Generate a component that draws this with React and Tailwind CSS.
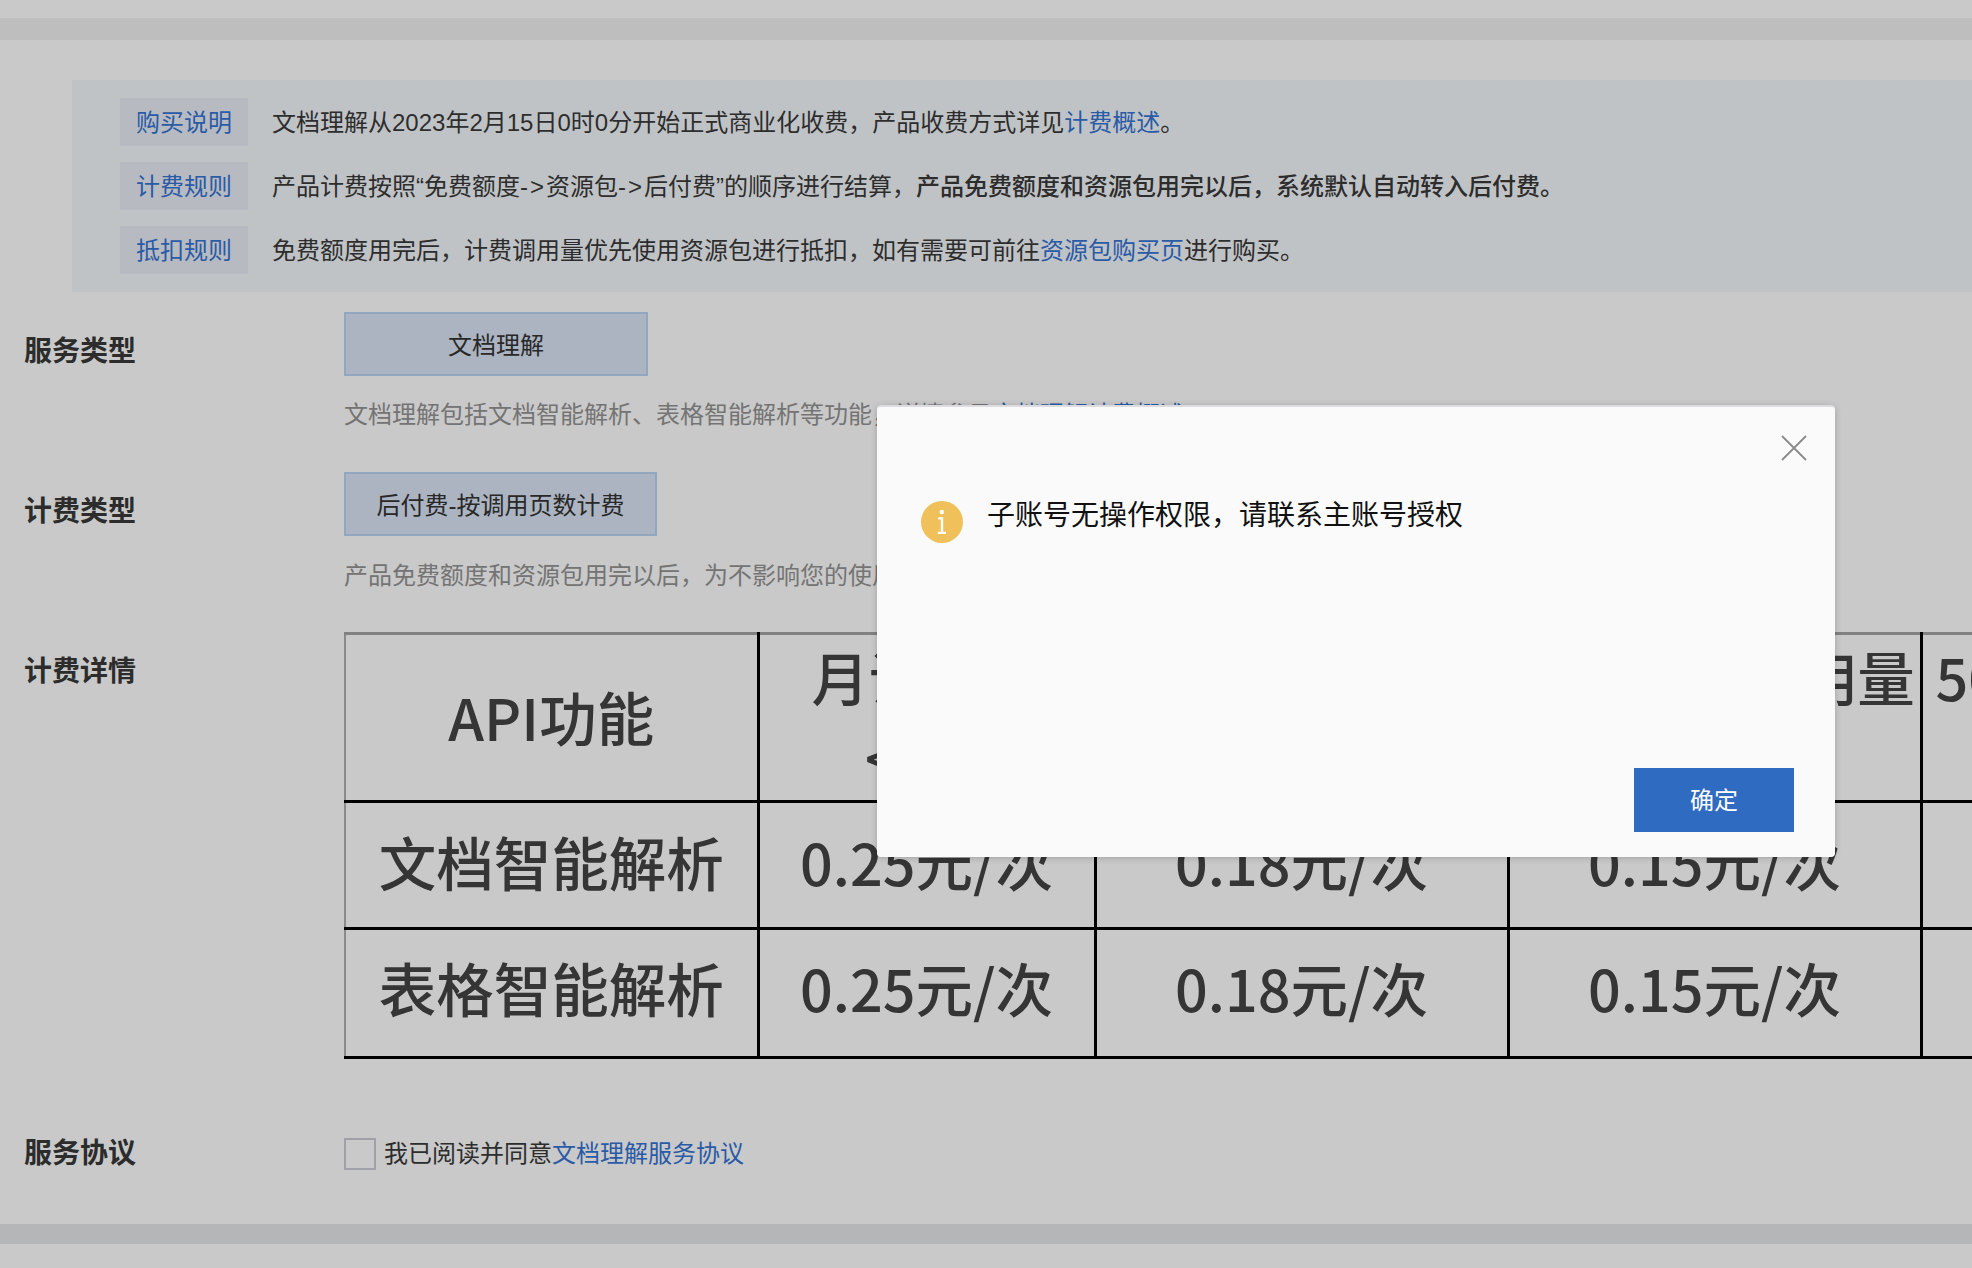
const SANS = "font-['Liberation_Sans','Noto_Sans_CJK_SC',sans-serif]";

function Tag({ children }) {
  return (
    <span className="flex h-12 w-32 shrink-0 items-center justify-center bg-[#e9eef5] pt-px text-2xl text-[#3574d4]">
      {children}
    </span>
  );
}

function Notice({ label, children }) {
  return (
    <div className="flex items-center gap-6">
      <Tag>{label}</Tag>
      <p className="whitespace-nowrap pt-[2px] text-2xl text-[#3a3a3a]">{children}</p>
    </div>
  );
}

function A({ children }) {
  return <a className="text-[#3574d4]">{children}</a>;
}

function Arrow() {
  return <span className="tracking-[2px]">-&gt;</span>;
}

function FormRow({ label, children }) {
  return (
    <section className="flex">
      <h3 className="mt-4 w-[320px] shrink-0 text-[28px] leading-[48px] font-bold text-[#383838]">{label}</h3>
      <div className="min-w-0 flex-1">{children}</div>
    </section>
  );
}

function Choice({ w, children }) {
  return (
    <button className={`flex h-16 ${w} items-center justify-center border-2 border-[#b9d4f3] bg-[#dbe5f6] pt-[3px] text-2xl text-[#333]`}>
      {children}
    </button>
  );
}

const th = "border-r-[3px] border-b-[3px] border-black p-0 text-center align-middle font-medium whitespace-nowrap";

function PriceRow({ name, h, shift, values }) {
  return (
    <tr className={h}>
      <td className={`${th} ${shift} border-l-2 !border-l-[#b0b0b0]`}>{name}</td>
      {values.map((v, i) => (
        <td key={i} className={`${th} ${shift}`}>{v}</td>
      ))}
    </tr>
  );
}

function PriceTable() {
  return (
    <table className="w-[1650px] table-fixed border-collapse border-t-[3px] border-t-[#a4a4a4] font-['Noto_Sans_CJK_SC',sans-serif] text-[57.5px] leading-[80px] text-[#444]">
      <colgroup>
        <col className="w-[413px]" />
        <col className="w-[337px]" />
        <col className="w-[413px]" />
        <col className="w-[413px]" />
        <col className="w-[413px]" />
      </colgroup>
      <tbody>
        <tr className="h-[168px]">
          <td className={`${th} border-l-2 !border-l-[#b0b0b0] pb-[4px]`}>API功能</td>
          <td className={`${th} pb-[4px]`}>月调用量<br />&lt;5万</td>
          <td className={`${th} pb-[4px]`}>5万≤月调用量<br />&lt;10万</td>
          <td className={`${th} pr-[4px] pb-[4px] tracking-[-1px]`}>10万≤月调用量<br />&lt;50万</td>
          <td className={`${th} pb-[4px] pl-[13px]`}>50万≤月调用量<br />&lt;100万</td>
        </tr>
        <PriceRow name="文档智能解析" h="h-[127px]" shift="pb-[8px]" values={["0.25元/次", "0.18元/次", "0.15元/次", "0.12元/次"]} />
        <PriceRow name="表格智能解析" h="h-[129px]" shift="pb-[12px]" values={["0.25元/次", "0.18元/次", "0.15元/次", "0.12元/次"]} />
      </tbody>
    </table>
  );
}

function InfoIcon() {
  return (
    <svg width="42" height="42" viewBox="0 0 42 42" className="shrink-0">
      <circle cx="21" cy="21" r="21" fill="#f0c05a" />
      <circle cx="20.8" cy="11" r="2.3" fill="#fff" />
      <path d="M17.2 16.2h5v14.6H25V33h-8.2v-2.2h3V18.4h-2.6z" fill="#fff" />
    </svg>
  );
}

function CloseIcon() {
  return (
    <svg width="26" height="26" viewBox="0 0 26 26" fill="none" stroke="#8a8a8a" strokeWidth="1.8">
      <path d="M1 1l24 24M25 1L1 25" />
    </svg>
  );
}

function Modal() {
  return (
    <div className="absolute top-[405px] left-[877px] flex h-[452px] w-[958px] flex-col rounded border-t-2 border-[#dcdce0] bg-[#fafafa] pr-[41px] pb-[25px] pl-[44px] shadow-[0_1px_6px_rgba(0,0,0,0.2)]">
      <div className="-mr-[13px] flex justify-end pt-[28px]">
        <button className="flex"><CloseIcon /></button>
      </div>
      <div className="mt-[38px] flex gap-6">
        <div className="pt-[2px]"><InfoIcon /></div>
        <p className="-mt-px text-[28px] leading-[36px] text-[#111]">子账号无操作权限，请联系主账号授权</p>
      </div>
      <div className="mt-auto flex justify-end">
        <button className="h-16 w-40 bg-[#2f6cc1] pt-[2px] text-2xl text-white">确定</button>
      </div>
    </div>
  );
}

export default function App() {
  return (
    <div lang="zh-CN" className={`relative h-[1268px] w-[1972px] overflow-hidden bg-white ${SANS}`}>
      <div className="pt-[18px]">
        <div className="h-[22px] bg-[#f2f2f3]" />
        <div className="mt-10 ml-[72px] flex h-[212px] flex-col justify-center gap-4 bg-[#f4f8fc] pl-12">
          <Notice label="购买说明">文档理解从2023年2月15日0时0分开始正式商业化收费，产品收费方式详见<A>计费概述</A>。</Notice>
          <Notice label="计费规则">产品计费按照“免费额度<Arrow />资源包<Arrow />后付费”的顺序进行结算，<b className="font-medium">产品免费额度和资源包用完以后，系统默认自动转入后付费。</b></Notice>
          <Notice label="抵扣规则">免费额度用完后，计费调用量优先使用资源包进行抵扣，如有需要可前往<A>资源包购买页</A>进行购买。</Notice>
        </div>
        <main className="mt-5 flex flex-col pl-6">
          <FormRow label="服务类型">
            <Choice w="w-[304px]">文档理解</Choice>
            <p className="mt-[21px] mb-[39px] whitespace-nowrap text-2xl leading-9 text-[#949494]">文档理解包括文档智能解析、表格智能解析等功能，详情参见<A>文档理解计费概述</A></p>
          </FormRow>
          <FormRow label="计费类型">
            <Choice w="w-[313px]">后付费-按调用页数计费</Choice>
            <p className="mt-[22px] mb-[38px] whitespace-nowrap text-2xl leading-9 text-[#949494]">产品免费额度和资源包用完以后，为不影响您的使用，系统默认自动转入后付费</p>
          </FormRow>
          <FormRow label="计费详情">
            <PriceTable />
          </FormRow>
          <section className="mt-[74px] flex items-center">
            <h3 className="w-[320px] shrink-0 text-[28px] font-bold text-[#383838]">服务协议</h3>
            <label className="flex items-center gap-2 text-2xl text-[#3a3a3a]">
              <span className="h-8 w-8 border-2 border-[#cbcbd4]" />
              <span>我已阅读并同意<A>文档理解服务协议</A></span>
            </label>
          </section>
        </main>
        <div className="mt-[49px] h-5 bg-[#e6e7ea]" />
      </div>
      <div className="absolute inset-0 bg-black/[0.21]" />
      <Modal />
    </div>
  );
}
